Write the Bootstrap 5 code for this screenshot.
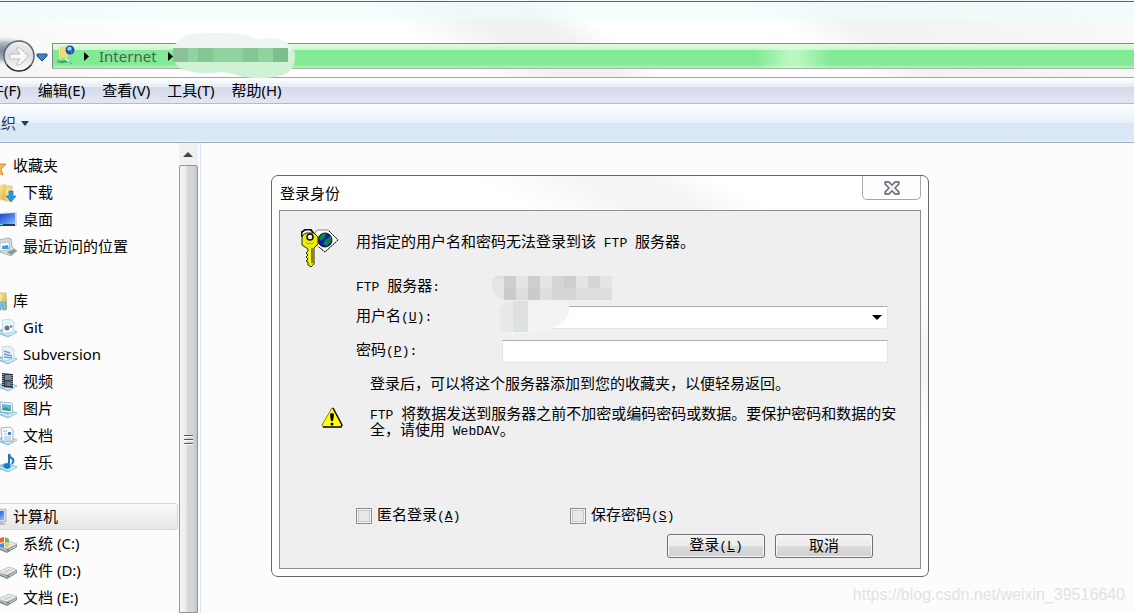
<!DOCTYPE html>
<html lang="zh-CN">
<head>
<meta charset="utf-8">
<meta name="viewport" content="width=device-width, initial-scale=1">
<title>登录身份</title>
<link href="https://cdn.jsdelivr.net/npm/bootstrap@5.3.0/dist/css/bootstrap.min.css" rel="stylesheet">
<style>
  body { font-family: "Noto Sans", "Noto Sans CJK SC", sans-serif; font-size: 15px; line-height: 27px; color: #000; background: #fcfcfc; overflow: hidden; }
  a { color: inherit; text-decoration: none; }
  svg { display: block; flex: none; }

  /* window frame and address bar */
  .frame-top { padding: 42px 0 8px; border-top: 1px solid #f4f4f4; border-bottom: 1px solid #a3a3a3;
    background: linear-gradient(#5f6668 1px, transparent 1px), linear-gradient(rgba(235,255,253,.6) 18px, transparent 19px),
      linear-gradient(35deg, #f3f3f3 0, #fafafa 8%, #fff 20%, #fff 38%, #f1f1f1 45%, #f1f1f1 50%, #fff 54%, #fff 69%, #f2f2f2 75%, #fafafa 100%); }
  .nav-keys { width: 52px; height: 26px; }
  .nav-keys svg { margin-top: -6px; }
  .address { height: 26px; border: 1px solid #868b86; border-bottom-color: #a5b8a7; border-right: 0; color: #505f54;
    background: linear-gradient(90deg, transparent 65%, rgba(222,255,220,.6) 68%, rgba(222,255,220,.6) 69%, transparent 72%),
      linear-gradient(#e6fbe4 0, #c8f6ce 6px, #80ea94 6px, #80ea94 20px, #b2f2ba 24px); }
  .crumb-text { margin-left: 10px; }
  .crumb-mask { left: 120px; top: -11px; }

  .menu-strip { height: 26px; line-height: 25px; gap: 17px; border-bottom: 1px solid #b4b9d4;
    background: linear-gradient(#fff 0, #e6ebf4 9px, #d4daec 9px, #e1e6f5 24px); }
  .menu-strip a:first-child { margin-left: -26px; }
  .tool-strip { height: 39px; line-height: 38px; border-bottom: 1px solid #9bb0cd; color: #1e3a63;
    background: linear-gradient(#fcfeff 0, #e6f1fb 19px, #dce6f4 19px, #dae8f5 36px, #e6f0fa 37px); }
  .organize { margin-left: -14px; padding: 0; border: 0; background: none; color: inherit; }

  /* folder tree */
  .side-pane { width: 179px; }
  .tree { margin: 9px 1px 27px 0; padding: 0; list-style: none; }
  .tree + .tree { margin-top: 0; }
  .tree a { display: flex; align-items: center; gap: 6px; height: 27px; margin-left: -13px; white-space: nowrap; }
  .tree ul { margin: 0; padding: 0 0 0 10px; list-style: none; }
  .tree a.current { margin-left: -14px; border: 1px solid #d9d9d9; border-radius: 3px; background: linear-gradient(#fafafa, #e5e5e5); }
  .scroll-rail { width: 22px; border-right: 1px solid #d5e5f6; background: linear-gradient(90deg, #f0f0f0 19px, #fcfcfc 19px); }
  .scroll-up { height: 22px; }
  .scroll-thumb { width: 19px; border: 1px solid #959595; border-radius: 2px 2px 0 0; background: linear-gradient(90deg, #f5f5f5 0, #ebebec 35%, #d6d7d9 45%, #d4d5d7 75%, #c2c3c5 100%); }

  /* login dialog */
  .work-area { padding: 32px 24px 0 70px; }
  .login-box { max-width: 658px; border: 1px solid #64696a; border-radius: 7px; padding: 0 7px 7px;
    background: linear-gradient(30deg, #fff 66%, #f4f6f5 74%, #f4f6f5 79%, #fff 84%); }
  .login-title { height: 34px; }
  .login-title h1 { font-size: 15px; line-height: 34px; margin: 0 0 0 1px; }
  .close-key { width: 59px; height: 24px; border: 1px solid #a3a8a8; border-top: 0; border-radius: 0 0 5px 5px; padding: 0; background: #fdfefe; }
  .login-panel { border: 1px solid #8c9090; background: #efefef; padding: 16px 22px 10px 20px; line-height: 15px;
    font-family: "Liberation Serif", "Noto Sans CJK SC", serif; }
  .lat { font-family: "Liberation Mono", monospace; font-size: 13px; }
  .icon-cell { width: 56px; }
  .message { padding: 8px 0 0; }
  .fields { padding: 3px 10px 0 56px; }
  .field { height: 30px; }
  .field > label, .field > .caption { width: 146px; }
  .field .form-control, .field .form-select { height: 23px; min-height: 0; padding: 0 20px 0 4px; border: 1px solid #e3e3ea; border-top-color: #abadb3; border-radius: 1px; font-size: 14px; line-height: 20px; background-color: #fff; }
  .field .form-select { background-image: url("data:image/svg+xml,%3Csvg xmlns='http://www.w3.org/2000/svg' width='10' height='5'%3E%3Cpath d='M0 0h10L5 5z'/%3E%3C/svg%3E"); background-size: 10px 5px; background-position: right 5px center; }
  .pass-row { margin-top: 4px; }
  .user-mask { left: 192px; top: 7px; }
  .note { padding: 11px 0 0 70px; }
  .warning { padding: 15px 0 0 21px; gap: 27px; }
  .choices { padding: 69px 0 0 56px; }
  .choice { width: 214px; gap: 5px; }
  .choice .form-check-input { width: 16px; height: 16px; margin: 0; border: 1px solid #8b8f90; border-radius: 0; box-shadow: inset 0 0 0 1px #f4f4f4, inset 0 0 0 2px #c5c9cf; background-color: #e6e8ea; }
  .actions { gap: 10px; padding: 10px 25px 0 0; }
  .push { width: 98px; height: 24px; border: 1px solid #707070; border-radius: 3px; padding: 0; font-size: 15px; line-height: 20px; color: #000; font-family: inherit; box-shadow: inset 0 0 0 1px #fafafa;
    background: linear-gradient(#f3f3f3 0, #ebebeb 50%, #dcdcdc 50%, #cfcfcf 100%); }
  .source-mark { position: absolute; right: 9px; bottom: 9px; font: 16px "Liberation Sans", sans-serif; color: #e2e2e2; }
</style>
</head>
<body class="d-flex flex-column vh-100 position-relative">
<svg width="0" height="0" class="position-absolute" aria-hidden="true">
  <defs>
    <linearGradient id="blueGlass" x1="0" y1="0" x2="1" y2="1"><stop stop-color="#1c3fb0"/><stop offset=".6" stop-color="#4a86ee"/><stop offset="1" stop-color="#8cc4ff"/></linearGradient>
    <linearGradient id="stand" x1="0" y1="0" x2="1" y2="0"><stop stop-color="#74b7d8"/><stop offset="1" stop-color="#c8ecfa"/></linearGradient>
    <linearGradient id="gold" x1="0" y1="0" x2="1" y2="1"><stop stop-color="#fff0a8"/><stop offset="1" stop-color="#dcae3c"/></linearGradient>
    <linearGradient id="ring" x1="0" y1="0" x2="0" y2="1"><stop stop-color="#f2f2f2"/><stop offset=".5" stop-color="#dadbdc"/><stop offset="1" stop-color="#fff"/></linearGradient>
    <radialGradient id="haze"><stop stop-color="#718097"/><stop offset=".55" stop-color="#8c98a8" stop-opacity=".7"/><stop offset="1" stop-color="#e0e6ec" stop-opacity="0"/></radialGradient>
    <symbol id="base" viewBox="0 0 20 20"><path d="M1 13l9-3 10 4-9 5L1 15z" fill="url(#stand)" stroke="#6db2d6" stroke-width=".7"/><path d="M3 14l8 3 7-3" stroke="#e8faff" fill="none"/></symbol>
    <symbol id="drive" viewBox="0 0 20 20"><path d="M1 11l11-5 8 3v3l-10 6-9-4z" fill="#85898b"/><path d="M1 11l11-5 8 3-10 5z" fill="#eceded" stroke="#b2b5b5" stroke-width=".6"/><path d="M5 11l7-3 4 1-7 3z" fill="#d2d4d4"/><path d="M2 12l8 4 9-5" stroke="#d3d6d7" fill="none"/><path d="M10 14h2v2h-2z" fill="#35bd38"/></symbol>
  </defs>
</svg>

<header class="frame-top d-flex">
  <div class="nav-keys flex-shrink-0">
    <svg width="52" height="38" viewBox="0 0 52 38" aria-label="前进">
      <ellipse cx="5" cy="14" rx="30" ry="15" fill="url(#haze)"/>
      <circle cx="19" cy="19" r="15" fill="url(#ring)" fill-opacity=".93" stroke="#626567" stroke-width="1.5"/>
      <path d="M7 28a15 15 0 0 0 24 0" stroke="#25282a" fill="none" stroke-width="1.2"/>
      <path d="M10 17h10l-4-6h4l8 8-8 9h-4l4-6H10z" fill="#f8f8f8" stroke="#bfc0c0"/>
      <path d="M37 17h10v2l-5 5-5-5z" fill="#3986c6" stroke="#174b7a"/>
    </svg>
  </div>
  <nav class="address flex-grow-1 d-flex align-items-center position-relative" aria-label="地址">
    <svg width="22" height="24" viewBox="0 0 22 24">
      <path d="M6 3l3-1v12l-3 1z" fill="#fff2a6"/><path d="M7 4l8-2v12H7z" fill="#f6da77" stroke="#e3c869" stroke-width=".5"/>
      <circle cx="17" cy="6" r="4.500" fill="#1754aa"/><path d="M15 3l3 0 1 2-2 2-3-1z" fill="#93d1ef"/><path d="M18 7l2 0-2 3z" fill="#48a95a"/>
      <path d="M3 16l6 1 6-2v3l-6 1z" fill="#2aa95a"/><path d="M13 16l6 4M4 18l6 1" stroke="#6f9c7c" fill="none"/><path d="M12 14l4 2v2l-4-2z" fill="#e4f7e6"/>
    </svg>
    <svg class="ms-2" width="6" height="9"><path d="M1 0l5 4.500L1 9z"/></svg>
    <a href="#" class="crumb-text">Internet</a>
    <svg class="crumb-text" width="6" height="9"><path d="M1 0l5 4.500L1 9z"/></svg>
    <svg class="crumb-mask position-absolute" width="122" height="46" viewBox="0 0 122 46">
      <path d="M14 2Q35-1 62 1q16 1 22 6 20-4 30 3 10 7 8 18-2 10-12 14-20 6-44 1-10-4-18-4-20 3-33-1Q1 35 0 23 1 7 14 2z" fill="#cff2d5"/>
      <path d="M14 2Q35-1 62 1q16 1 22 6 20-4 30 3 4 3 5 7H0Q4 5 14 2z" fill="#eff6f1"/>
      <path d="M0 15h115v14H0z" fill="#8fd49d"/><path d="M0 15h15v14H0z" fill="#8dbf99"/><path d="M25 15h15v14H25zM70 15h15v14H70z" fill="#83c892"/><path d="M100 15h15v14h-15z" fill="#7dbf8b"/>
    </svg>
  </nav>
</header>

<nav class="menu-strip d-flex text-nowrap">
  <a href="#">文件(F)</a><a href="#">编辑(E)</a><a href="#">查看(V)</a><a href="#">工具(T)</a><a href="#">帮助(H)</a>
</nav>
<div class="tool-strip d-flex">
  <button class="organize d-flex align-items-center" type="button">组织<svg class="ms-1" width="10" height="5"><path d="M1 0h8L5 5z" fill="#1e3a63"/></svg></button>
</div>

<div class="d-flex flex-grow-1 overflow-hidden">
  <aside class="side-pane flex-shrink-0 overflow-hidden">
    <ul class="tree">
      <li><a href="#"><svg width="20" height="20" viewBox="0 0 20 20"><path d="M8 3l3 5 8 0-5 5 2 6-7-3-7 3 2-7-4-4 6-1z" fill="#ffb655" stroke="#e48635"/></svg>收藏夹</a>
        <ul>
          <li><a href="#"><svg width="20" height="20" viewBox="0 0 20 20"><path d="M1 2l8-1v17l-8-2z" fill="url(#gold)"/><path d="M8 3l7 0v15l-7 0z" fill="#f6dd8c" stroke="#d5b75b" stroke-width=".6"/><path d="M12 8h4v5h3l-5 6-5-6h3z" fill="#2499e4" stroke="#1470b5" stroke-width=".6"/></svg>下载</a></li>
          <li><a href="#"><svg width="20" height="20" viewBox="0 0 20 20"><path d="M1 3l19-1v14L1 16z" fill="#cfd9e2"/><path d="M1 4l17-1v11L1 14z" fill="url(#blueGlass)"/><path d="M1 14h17v2H1z" fill="#203c64"/><path d="M3 14h3v1H3z" fill="#70e0f0"/></svg>桌面</a></li>
          <li><a href="#"><svg width="20" height="20" viewBox="0 0 20 20"><path d="M2 3l9-2 3 1 1 8 5 4-6 5-11-4z" fill="#d7dadd" stroke="#92989e" stroke-width=".7"/><path d="M3 6l9-1 1 8-10 1z" fill="#fff" stroke="#94a1ae" stroke-width=".6"/><path d="M5 9l6-1 1 4-7 0z" fill="#3aa1d5"/><path d="M10 15l8-3 1 2-5 4z" fill="#8b9296"/></svg>最近访问的位置</a></li>
        </ul></li>
    </ul>
    <ul class="tree">
      <li><a href="#"><svg width="20" height="20" viewBox="0 0 20 20"><path d="M4 3l8-1h7l1 16H4z" fill="url(#gold)" stroke="#c9a443" stroke-width=".6"/><path d="M14 3v15" stroke="#fff2b2"/><path d="M12 11h7v8h-3v-5h-2v5h-2z" fill="#78c7e8" stroke="#4599c2" stroke-width=".6"/></svg>库</a>
        <ul>
          <li><a href="#"><svg width="20" height="20" viewBox="0 0 20 20"><use href="#base"/><path d="M5 2l8-1 4 3v10l-11 2z" fill="#e4f2fa" stroke="#aecbdc" stroke-width=".6"/><path d="M7 8l8-2v7l-8 1z" fill="#fff"/><circle cx="10" cy="10" r="2.500" fill="#65738a"/><path d="M13 9l2-1" stroke="#65738a" stroke-width="2"/></svg>Git</a></li>
          <li><a href="#"><svg width="20" height="20" viewBox="0 0 20 20"><use href="#base"/><path d="M5 2l8-1 4 3v10l-11 2z" fill="#e7f1fa" stroke="#abc5dc" stroke-width=".6"/><path d="M7 6l6 2M7 9l8 2M7 12l8 1" stroke="#7f9bc9" stroke-width="1.500"/></svg>Subversion</a></li>
          <li><a href="#"><svg width="20" height="20" viewBox="0 0 20 20"><use href="#base"/><path d="M5 1l11 1v14L5 15z" fill="#2d3b46"/><path d="M8 3l6 0v5H8z" fill="#4f9acb"/><path d="M8 9h6v5H8z" fill="#396c9a"/><path d="M10 6l4-2v3l-3 1zM9 12l4-2v4" fill="#cf693c"/><path d="M6 2v13M15 3v12" stroke="#e2e9ed" stroke-dasharray="1 1"/></svg>视频</a></li>
          <li><a href="#"><svg width="20" height="20" viewBox="0 0 20 20"><use href="#base"/><path d="M3 3l12 1 1 10L4 13z" fill="#f7fafb" stroke="#8ea6b2" stroke-width=".8"/><path d="M5 5l9 1v6l-9-1z" fill="#65b8e2"/><path d="M5 10l4-2 5 3v1l-9-1z" fill="#409a79"/></svg>图片</a></li>
          <li><a href="#"><svg width="20" height="20" viewBox="0 0 20 20"><use href="#base"/><path d="M4 2l9-1 3 3v11l-11 0z" fill="#f8fbfc" stroke="#8aa1b2" stroke-width=".8"/><path d="M6 5h4M7 8h3M7 11h7M7 13h7" stroke="#a1b7c7"/><path d="M11 6h3v3h-3z" fill="#4388bd"/></svg>文档</a></li>
          <li><a href="#"><svg width="20" height="20" viewBox="0 0 20 20"><use href="#base"/><ellipse cx="10" cy="13" rx="3.500" ry="2.700" fill="#1b79bd"/><path d="M12 13V1q1 4 4 5 1 2-1 5" fill="none" stroke="#1b79bd" stroke-width="2"/></svg>音乐</a></li>
        </ul></li>
    </ul>
    <ul class="tree">
      <li><a href="#" class="current"><svg width="20" height="20" viewBox="0 0 20 20"><path d="M3 3l16-1v13L3 14z" fill="#d8dcde" stroke="#969ca2" stroke-width=".6"/><path d="M5 4l12 0v9H5z" fill="url(#blueGlass)"/><path d="M11 14h4l4 4h-9z" fill="#b7bfc5"/></svg>计算机</a>
        <ul>
          <li><a href="#"><svg width="20" height="20" viewBox="0 0 20 20"><use href="#drive" y="1"/><path d="M3 4l4-1v5l-4 1z" fill="#e76832"/><path d="M8 3l4 2v4L8 8z" fill="#71b74a"/><path d="M3 10l4-1v5l-4-1z" fill="#4097cf"/><path d="M8 9l4 1-1 4-3-1z" fill="#f4c64c"/></svg>系统 (C:)</a></li>
          <li><a href="#"><svg width="20" height="20"><use href="#drive"/></svg>软件 (D:)</a></li>
          <li><a href="#"><svg width="20" height="20"><use href="#drive"/></svg>文档 (E:)</a></li>
        </ul></li>
    </ul>
  </aside>
  <div class="scroll-rail flex-shrink-0 d-flex flex-column" aria-hidden="true">
    <div class="scroll-up d-flex align-items-center ps-1"><svg width="10" height="5"><path d="M5 0l5 5H0z" fill="#454545"/></svg></div>
    <div class="scroll-thumb flex-grow-1 d-flex align-items-center justify-content-center">
      <svg width="9" height="122" viewBox="0 0 9 122"><path d="M0 107.500h9M0 111.500h9M0 115.500h9" stroke="#55585a"/><path d="M0 108.500h9M0 112.500h9M0 116.500h9" stroke="#fff"/></svg>
    </div>
  </div>

  <main class="work-area flex-grow-1">
    <section class="login-box" role="dialog" aria-labelledby="dialogTitle">
      <div class="login-title d-flex justify-content-between align-items-start">
        <h1 id="dialogTitle" class="fw-normal">登录身份</h1>
        <button class="close-key d-flex justify-content-center align-items-center" type="button" aria-label="关闭">
          <svg width="16" height="14" viewBox="0 0 16 14"><path d="M1 1h4l3 3 3-3h4v2l-4 4 4 4v2h-4l-3-3-3 3H1v-2l4-4-4-4z" fill="#f0f0f1" stroke="#5a5b6c" stroke-width="1.300" stroke-linejoin="round"/></svg>
        </button>
      </div>
      <form class="login-panel">
        <div class="d-flex align-items-start">
          <div class="icon-cell flex-shrink-0">
            <svg width="40" height="42" viewBox="0 0 40 42">
              <path d="M15 5l3-2h10l10 10-13 12-10-8z" fill="#fff" stroke="#888"/><path d="M29 4l9 9-13 12-6-5" fill="none" stroke="#111" stroke-dasharray="2 1"/>
              <path d="M2 10V5l3-2h6l3 4" fill="none" stroke="#111" stroke-width="2"/><path d="M3 8V6l3-2h4l2 3" fill="none" stroke="#fff"/>
              <circle cx="25" cy="13" r="7" fill="#1414cd" stroke="#111"/><path d="M19 11l3-4 4-1-1 4-4 4zM25 13l6-4v5l-4 5-4-2z" fill="#078b31"/>
              <path d="M3 8l3-2h8l4 4v7l-4 4v16l-3 3-3-2v-3l-2-1 2-2-2-2 2-2-2-2 2-2v-2l-6-4v-8z" fill="#eded00" stroke="#2e2e00"/>
              <path d="M12 21v15" stroke="#858500" stroke-width="2"/><path d="M10 21v15" stroke="#ffff8a"/><circle cx="10" cy="10" r="3" fill="#efefef" stroke="#111" stroke-width="1.500"/><path d="M6 15l2 2 2-1 2 1 2-2" fill="none" stroke="#999"/>
            </svg>
          </div>
          <p class="message mb-0">用指定的用户名和密码无法登录到该<span class="lat"> FTP </span>服务器。</p>
        </div>
        <div class="fields position-relative">
          <div class="field d-flex align-items-center"><span class="caption"><span class="lat">FTP </span>服务器<span class="lat">:</span></span></div>
          <div class="field d-flex align-items-center">
            <label for="userName">用户名<span class="lat">(<u>U</u>):</span></label>
            <select id="userName" class="form-select flex-fill w-auto"><option></option></select>
          </div>
          <div class="field pass-row d-flex align-items-center">
            <label for="passWord">密码<span class="lat">(<u>P</u>):</span></label>
            <input id="passWord" type="password" class="form-control flex-fill w-auto">
          </div>
          <svg class="user-mask position-absolute" width="122" height="62" viewBox="0 0 122 62" aria-hidden="true">
            <path d="M5 0h115v24H12Q2 20 0 12V3z" fill="#dedede"/>
            <path d="M0 3h12v21Q2 20 0 12z" fill="#e6e6e6"/><path d="M12 0h12v12H12zM36 0h12v12H36zM72 0h12v12H72z" fill="#cecece"/><path d="M24 0h12v12H24zM48 0h12v12H48zM84 0h12v12H84zM108 0h12v12h-12z" fill="#e4e4e4"/><path d="M12 12h12v12H12zM36 12h12v12H36z" fill="#cbcbcb"/><path d="M60 0h12v12H60zM60 12h24v12H60zM96 0h12v12H96z" fill="#d5d5d5"/>
            <path d="M14 25h61q4 8 1 15-4 7-15 12-20 9-51 5Q7 49 7 37 8 29 14 25z" fill="#f3f3f3"/>
            <path d="M14 25h8v31H10Q7 46 7 37 8 29 14 25z" fill="#e9e9e9"/><path d="M21 25h15v16H21z" fill="#dfdfdf"/><path d="M21 41h15v15H21z" fill="#dde1e1"/>
          </svg>
        </div>
        <p class="note mb-0">登录后，可以将这个服务器添加到您的收藏夹，以便轻易返回。</p>
        <div class="warning d-flex align-items-start">
          <svg width="22" height="22" viewBox="0 0 22 22"><path d="M11 1L1 18l1 2h18l1-2L12 1z" fill="#ff0" stroke="#888300"/><path d="M12 1l9 17-1 2H2" fill="none" stroke="#111" stroke-width="1.500"/><path d="M9 8q0-2 2-2t2 2l-1 6h-2z"/><circle cx="11" cy="17" r="1.500"/></svg>
          <p class="mb-0"><span class="lat">FTP </span>将数据发送到服务器之前不加密或编码密码或数据。要保护密码和数据的安全，请使用<span class="lat"> WebDAV</span>。</p>
        </div>
        <div class="choices d-flex">
          <div class="choice d-flex align-items-center"><input class="form-check-input" type="checkbox" id="anonymous"><label for="anonymous">匿名登录<span class="lat">(<u>A</u>)</span></label></div>
          <div class="choice d-flex align-items-center"><input class="form-check-input" type="checkbox" id="savePass"><label for="savePass">保存密码<span class="lat">(<u>S</u>)</span></label></div>
        </div>
        <div class="actions d-flex justify-content-end">
          <button class="btn push" type="submit">登录<span class="lat">(<u>L</u>)</span></button>
          <button class="btn push" type="button">取消</button>
        </div>
      </form>
    </section>
  </main>
</div>
<div class="source-mark">https://blog.csdn.net/weixin_39516640</div>
<script src="https://cdn.jsdelivr.net/npm/bootstrap@5.3.0/dist/js/bootstrap.bundle.min.js"></script>
</body>
</html>
